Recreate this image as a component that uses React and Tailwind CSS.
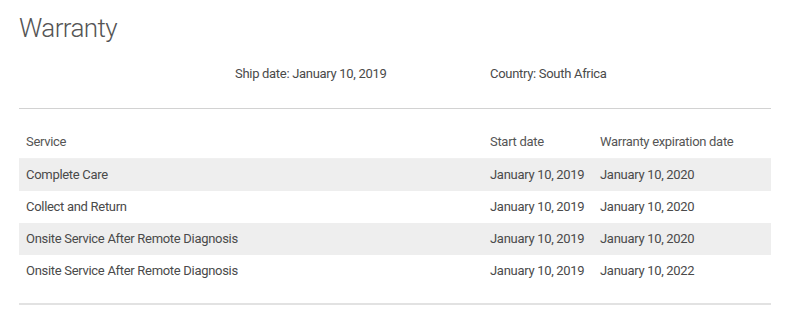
const rows = [
  { service: "Complete Care", start: "January 10, 2019", end: "January 10, 2020" },
  { service: "Collect and Return", start: "January 10, 2019", end: "January 10, 2020" },
  { service: "Onsite Service After Remote Diagnosis", start: "January 10, 2019", end: "January 10, 2020" },
  { service: "Onsite Service After Remote Diagnosis", start: "January 10, 2019", end: "January 10, 2022" },
];

export default function App() {
  return (
    <div className="min-h-screen bg-white font-['Roboto',sans-serif] text-[13px] tracking-[-0.3px] text-[#4a4a4a]">
      <div className="w-[752px] ml-[19px] pt-[12px]">
        <h1 className="text-[26px] leading-[32px] tracking-[-0.6px] font-light text-[#555]">Warranty</h1>

        {/* ship info */}
        <div className="mt-[20px] grid grid-cols-[216px_255px_1fr] leading-[20px]">
          <div />
          <div>Ship date: January 10, 2019</div>
          <div>Country: South Africa</div>
        </div>

        <div className="mt-[24px] h-px bg-[#d2d2d2]" />

        {/* table */}
        <div className="mt-[17px]">
          <div className="grid grid-cols-[464px_110px_1fr] h-[33px] items-center border-b border-[#f0f0f0] text-[#555]">
            <div className="pl-[7px]">Service</div>
            <div className="pl-[7px]">Start date</div>
            <div className="pl-[7px]">Warranty expiration date</div>
          </div>
          {rows.map((r, i) => (
            <div
              key={i}
              className={`grid grid-cols-[464px_110px_1fr] h-[32px] items-center ${i % 2 === 0 ? "bg-[#eeeeee]" : "bg-white"}`}
            >
              <div className="pl-[7px]">{r.service}</div>
              <div className="pl-[7px]">{r.start}</div>
              <div className="pl-[7px]">{r.end}</div>
            </div>
          ))}
        </div>

        <div className="mt-[16px] h-[2px] bg-[#e2e2e2]" />
      </div>
    </div>
  );
}
